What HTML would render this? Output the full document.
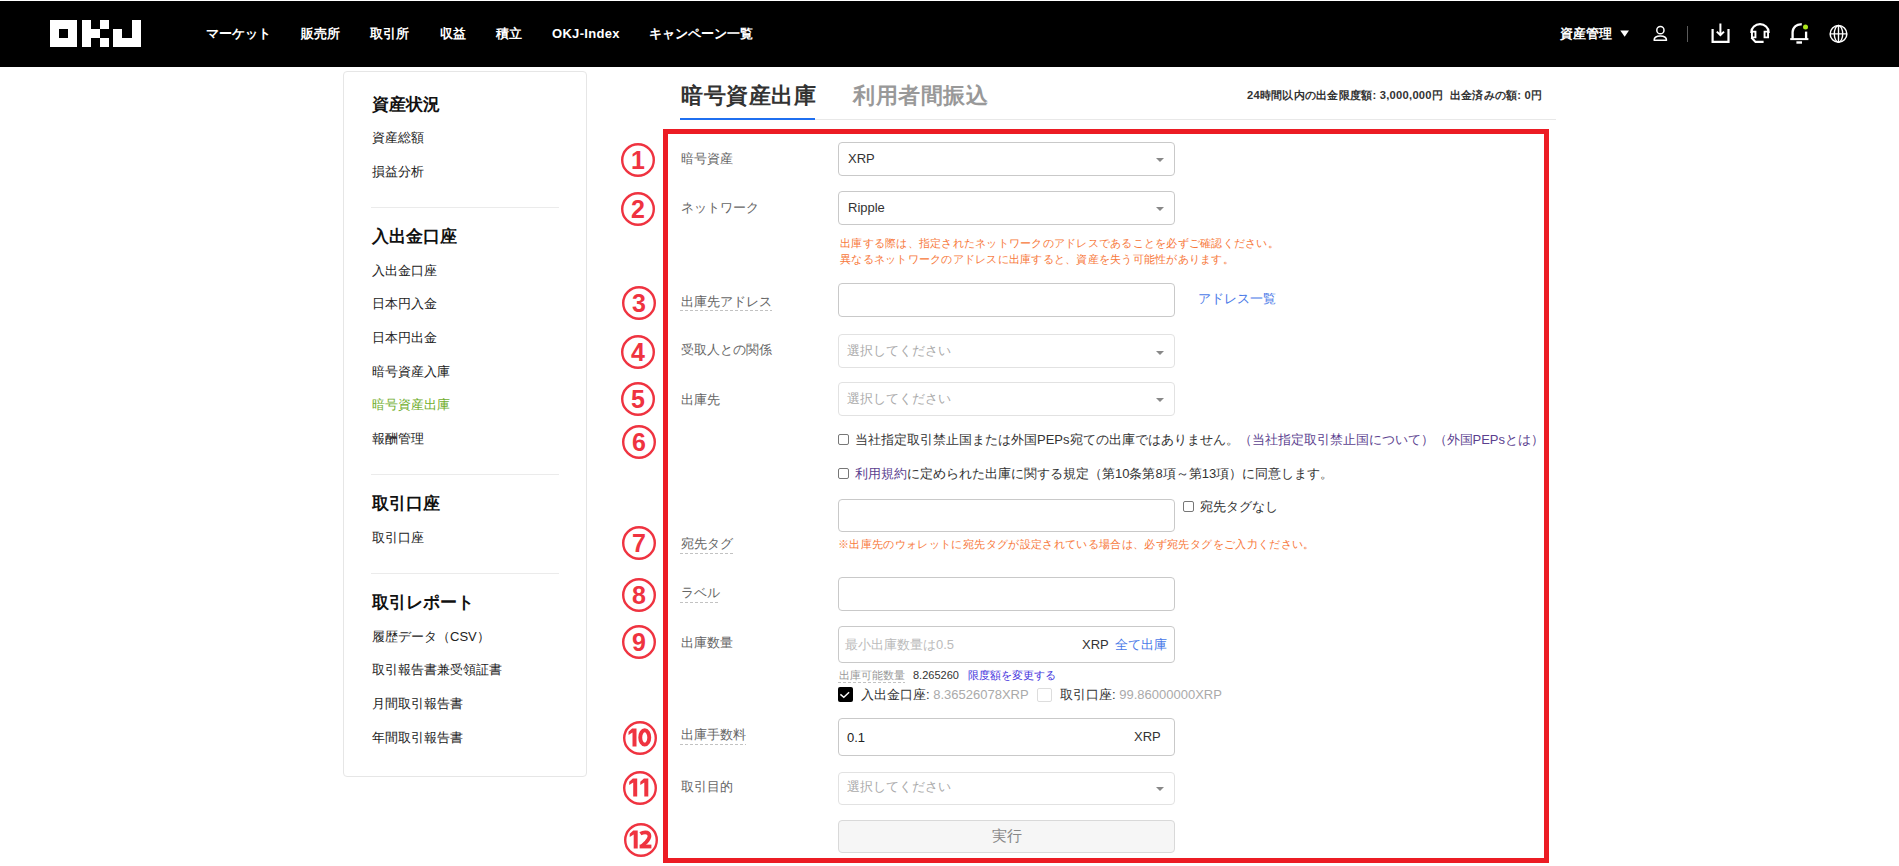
<!DOCTYPE html>
<html lang="ja"><head><meta charset="utf-8">
<style>
*{box-sizing:border-box;margin:0;padding:0}
html,body{width:1899px;height:866px;overflow:hidden;background:#fff;font-family:"Liberation Sans",sans-serif;color:#333}
.a{position:absolute;white-space:nowrap}
.t{position:absolute;white-space:nowrap;line-height:20px;font-size:13px}
#hdr{position:absolute;left:0;top:1px;width:1899px;height:66px;background:#000}
.nav{color:#fff;font-weight:bold;font-size:13px;top:24px}
#card{position:absolute;left:343px;top:71px;width:244px;height:706px;border:1px solid #e6e6e6;border-radius:4px}
.sh{font-size:16.5px;font-weight:bold;color:#111;left:372px}
.si{font-size:13px;color:#222;left:372px}
.dv{position:absolute;left:371px;width:188px;height:1px;background:#ebebeb}
.lbl{left:681px;color:#666}
.inp{position:absolute;left:838px;width:337px;border:1px solid #c9c9c9;border-radius:4px;background:#fff}
.inp.l{border-color:#e2e2e2}
.arr{position:absolute;right:10px;width:0;height:0;border-left:4px solid transparent;border-right:4px solid transparent;border-top:4px solid #888}
.circ{position:absolute;left:620px;width:35px;height:35px}
.dash{border-bottom:1px dashed #bbb}
.org{color:#f77b3d;font-size:11px}
.dsh{height:1px;background:repeating-linear-gradient(90deg,#c2c2c2 0 3px,transparent 3px 5px)}
.cb{position:absolute;width:11px;height:11px;border:1px solid #777;border-radius:2px;background:#fff}
</style></head><body>
<div id="hdr"></div>
<!-- logo -->
<svg class="a" style="left:50px;top:20px" width="92" height="28" viewBox="0 0 92 28">
<path fill="#fff" d="M0 0H27V27H0Z M9 9V18H18V9Z" fill-rule="evenodd"/>
<rect fill="#fff" x="32" y="0" width="9" height="27"/>
<rect fill="#fff" x="50" y="0" width="9" height="9"/>
<rect fill="#fff" x="41" y="9" width="9" height="9"/>
<rect fill="#fff" x="50" y="18" width="9" height="9"/>
<rect fill="#fff" x="63" y="18" width="28" height="9"/>
<rect fill="#fff" x="82" y="0" width="9" height="27"/>
<rect fill="#fff" x="63" y="9" width="9" height="18"/>
</svg>
<div class="t nav" style="left:206px">マーケット</div>
<div class="t nav" style="left:301px">販売所</div>
<div class="t nav" style="left:370px">取引所</div>
<div class="t nav" style="left:440px">収益</div>
<div class="t nav" style="left:496px">積立</div>
<div class="t nav" style="left:552px;letter-spacing:0.3px">OKJ-Index</div>
<div class="t nav" style="left:649px">キャンペーン一覧</div>
<div class="t nav" style="left:1560px;top:24px">資産管理</div>
<svg class="a" style="left:1600px;top:15px" width="260" height="35" viewBox="1600 15 260 35">
<path d="M1620.3 30.4H1629L1624.65 36.7Z" fill="#fff"/>
<circle cx="1660.4" cy="30.2" r="3.6" fill="none" stroke="#fff" stroke-width="1.5"/>
<path d="M1654.1 40.3C1654.1 37.6 1656.8 36 1660.3 36S1666.5 37.6 1666.5 40.3Z" fill="none" stroke="#fff" stroke-width="1.5" stroke-linejoin="round"/>
<rect x="1687" y="26" width="1" height="16" fill="#5a5a5a"/>
<path d="M1712.6 29V41.8H1728.5V29" fill="none" stroke="#fff" stroke-width="2.2"/>
<path d="M1720.4 23.5V35M1716.8 31.6L1720.4 35.2L1724 31.6" fill="none" stroke="#fff" stroke-width="2"/>
<path d="M1751.4 33V32A8.6 7.8 0 0 1 1768.6 32V33" fill="none" stroke="#fff" stroke-width="2.2"/>
<path d="M1751.95 31.65H1755.45V37.35H1751.95Z" fill="none" stroke="#fff" stroke-width="1.9"/>
<path d="M1764.55 31.65H1768.05V37.35H1764.55Z" fill="none" stroke="#fff" stroke-width="1.9"/>
<path d="M1751.4 37.5L1755.5 41.9H1763.6" fill="none" stroke="#fff" stroke-width="2.1"/>
<path d="M1792.6 39V32A8 8 0 0 1 1801.8 24.4" fill="none" stroke="#fff" stroke-width="2.3"/>
<path d="M1806.1 31.6V39" fill="none" stroke="#fff" stroke-width="2.3"/>
<path d="M1790.2 39.1H1808.4" fill="none" stroke="#fff" stroke-width="2"/>
<path d="M1796.4 42.5H1802" fill="none" stroke="#fff" stroke-width="2.4"/>
<circle cx="1805.5" cy="27" r="2.5" fill="#aee81c"/>
<circle cx="1838.5" cy="33.9" r="8.35" fill="none" stroke="#fff" stroke-width="1.5"/>
<ellipse cx="1838.5" cy="33.9" rx="4.2" ry="8.35" fill="none" stroke="#fff" stroke-width="1.4"/>
<path d="M1838.5 25.5V42.3M1830.2 33.9H1846.8" stroke="#fff" stroke-width="1.4"/>
</svg>

<!-- sidebar -->
<div id="card"></div>
<div class="t sh" style="top:94px">資産状況</div>
<div class="t si" style="top:128px">資産総額</div>
<div class="t si" style="top:162px">損益分析</div>
<div class="dv" style="top:207px"></div>
<div class="t sh" style="top:226px">入出金口座</div>
<div class="t si" style="top:261px">入出金口座</div>
<div class="t si" style="top:294px">日本円入金</div>
<div class="t si" style="top:328px">日本円出金</div>
<div class="t si" style="top:362px">暗号資産入庫</div>
<div class="t si" style="top:395px;color:#6fae2d">暗号資産出庫</div>
<div class="t si" style="top:429px">報酬管理</div>
<div class="dv" style="top:474px"></div>
<div class="t sh" style="top:493px">取引口座</div>
<div class="t si" style="top:528px">取引口座</div>
<div class="dv" style="top:573px"></div>
<div class="t sh" style="top:591.5px">取引レポート</div>
<div class="t si" style="top:627px">履歴データ（CSV）</div>
<div class="t si" style="top:660px">取引報告書兼受領証書</div>
<div class="t si" style="top:694px">月間取引報告書</div>
<div class="t si" style="top:728px">年間取引報告書</div>

<!-- tabs -->
<div class="a" style="left:681px;top:81px;line-height:30px;font-size:22px;letter-spacing:0.5px;font-weight:bold;color:#333">暗号資産出庫</div>
<div class="a" style="left:853px;top:81px;line-height:30px;font-size:22px;letter-spacing:0.5px;font-weight:bold;color:#999">利用者間振込</div>
<div class="a" style="left:815px;top:119px;width:741px;height:1px;background:#e8e8e8"></div>
<div class="a" style="left:680px;top:118px;width:135px;height:2px;background:#1f6ff0"></div>
<div class="a" style="left:1247px;top:84.5px;line-height:20px;font-size:11.2px;letter-spacing:0.25px;font-weight:bold;color:#333">24時間以内の出金限度額: 3,000,000円&nbsp; 出金済みの額: 0円</div>

<!-- red box -->
<div class="a" style="left:663px;top:129px;width:886px;height:734px;border:5px solid #ec1c24"></div>
<svg class="a" style="left:619.5px;top:142.0px" width="36" height="36" viewBox="0 0 36 36"><circle cx="18" cy="18" r="15.8" fill="none" stroke="#ef3340" stroke-width="2.4"/><text x="18" y="26.5" text-anchor="middle" font-family="Liberation Sans" font-weight="bold" font-size="25" fill="#ef3340">1</text></svg>
<svg class="a" style="left:619.5px;top:191.0px" width="36" height="36" viewBox="0 0 36 36"><circle cx="18" cy="18" r="15.8" fill="none" stroke="#ef3340" stroke-width="2.4"/><text x="18" y="26.5" text-anchor="middle" font-family="Liberation Sans" font-weight="bold" font-size="25" fill="#ef3340">2</text></svg>
<svg class="a" style="left:620.5px;top:285.0px" width="36" height="36" viewBox="0 0 36 36"><circle cx="18" cy="18" r="15.8" fill="none" stroke="#ef3340" stroke-width="2.4"/><text x="18" y="26.5" text-anchor="middle" font-family="Liberation Sans" font-weight="bold" font-size="25" fill="#ef3340">3</text></svg>
<svg class="a" style="left:619.5px;top:334.0px" width="36" height="36" viewBox="0 0 36 36"><circle cx="18" cy="18" r="15.8" fill="none" stroke="#ef3340" stroke-width="2.4"/><text x="18" y="26.5" text-anchor="middle" font-family="Liberation Sans" font-weight="bold" font-size="25" fill="#ef3340">4</text></svg>
<svg class="a" style="left:620.0px;top:381.3px" width="36" height="36" viewBox="0 0 36 36"><circle cx="18" cy="18" r="15.8" fill="none" stroke="#ef3340" stroke-width="2.4"/><text x="18" y="26.5" text-anchor="middle" font-family="Liberation Sans" font-weight="bold" font-size="25" fill="#ef3340">5</text></svg>
<svg class="a" style="left:620.5px;top:424.0px" width="36" height="36" viewBox="0 0 36 36"><circle cx="18" cy="18" r="15.8" fill="none" stroke="#ef3340" stroke-width="2.4"/><text x="18" y="26.5" text-anchor="middle" font-family="Liberation Sans" font-weight="bold" font-size="25" fill="#ef3340">6</text></svg>
<svg class="a" style="left:620.6px;top:525.0px" width="36" height="36" viewBox="0 0 36 36"><circle cx="18" cy="18" r="15.8" fill="none" stroke="#ef3340" stroke-width="2.4"/><text x="18" y="26.5" text-anchor="middle" font-family="Liberation Sans" font-weight="bold" font-size="25" fill="#ef3340">7</text></svg>
<svg class="a" style="left:620.6px;top:577.0px" width="36" height="36" viewBox="0 0 36 36"><circle cx="18" cy="18" r="15.8" fill="none" stroke="#ef3340" stroke-width="2.4"/><text x="18" y="26.5" text-anchor="middle" font-family="Liberation Sans" font-weight="bold" font-size="25" fill="#ef3340">8</text></svg>
<svg class="a" style="left:620.6px;top:624.0px" width="36" height="36" viewBox="0 0 36 36"><circle cx="18" cy="18" r="15.8" fill="none" stroke="#ef3340" stroke-width="2.4"/><text x="18" y="26.5" text-anchor="middle" font-family="Liberation Sans" font-weight="bold" font-size="25" fill="#ef3340">9</text></svg>
<svg class="a" style="left:621.5px;top:719.5px" width="36" height="36" viewBox="0 0 36 36"><circle cx="18" cy="18" r="15.8" fill="none" stroke="#ef3340" stroke-width="2.4"/><path transform="translate(18 18)" fill="#ef3340" d="M-3.50 8.4V-9.6H-7.90L-11.50 -6.30V-3.10L-7.50 -5.40V8.4Z"/><ellipse transform="translate(18 18)" cx="4.75" cy="-0.6" rx="4.5" ry="7.1" fill="none" stroke="#ef3340" stroke-width="3.9"/></svg>
<svg class="a" style="left:621.5px;top:769.7px" width="36" height="36" viewBox="0 0 36 36"><circle cx="18" cy="18" r="15.8" fill="none" stroke="#ef3340" stroke-width="2.4"/><path transform="translate(18 18)" fill="#ef3340" d="M-2.80 8.4V-9.6H-7.20L-10.80 -6.30V-3.10L-6.80 -5.40V8.4ZM8.30 8.4V-9.6H3.90L0.30 -6.30V-3.10L4.30 -5.40V8.4Z"/></svg>
<svg class="a" style="left:622.6px;top:821.8px" width="36" height="36" viewBox="0 0 36 36"><circle cx="18" cy="18" r="15.8" fill="none" stroke="#ef3340" stroke-width="2.4"/><path transform="translate(18 18)" fill="#ef3340" d="M-3.30 8.4V-9.6H-7.70L-11.30 -6.30V-3.10L-7.30 -5.40V8.4Z"/><path transform="translate(18 18)" fill="none" stroke="#ef3340" stroke-width="3.7" stroke-linejoin="round" d="M-0.6 -6.2Q1.6 -7.7 4.2 -7.7Q8.5 -7.7 8.5 -3.9Q8.5 -1.2 5.2 2.1L0.4 6.5"/><path transform="translate(18 18)" fill="#ef3340" d="M-1.4 4.6H10.4V8.4H-1.4Z"/></svg>
<div class="t" style="left:681px;top:149.0px;color:#666">暗号資産</div>
<div class="t" style="left:681px;top:198.0px;color:#666">ネットワーク</div>
<div class="t" style="left:681px;top:291.5px;color:#666">出庫先アドレス</div>
<div class="a dsh" style="left:680px;top:310px;width:92px"></div>
<div class="t" style="left:681px;top:340.3px;color:#666">受取人との関係</div>
<div class="t" style="left:681px;top:389.7px;color:#666">出庫先</div>
<div class="t" style="left:681px;top:534.2px;color:#666">宛先タグ</div>
<div class="a dsh" style="left:680px;top:553px;width:53px"></div>
<div class="t" style="left:681px;top:583.0px;color:#666">ラベル</div>
<div class="a dsh" style="left:680px;top:602px;width:40px"></div>
<div class="t" style="left:681px;top:632.5px;color:#666">出庫数量</div>
<div class="t" style="left:681px;top:725.2px;color:#666">出庫手数料</div>
<div class="a dsh" style="left:680px;top:744px;width:66px"></div>
<div class="t" style="left:681px;top:777.4px;color:#666">取引目的</div>
<div class="inp" style="top:142px;height:34px;"></div>
<div class="t" style="left:848px;top:148.5px;color:#333">XRP</div>
<div class="a arr" style="left:1156px;top:158px"></div>
<div class="inp" style="top:191px;height:34px;"></div>
<div class="t" style="left:848px;top:198.0px;color:#333">Ripple</div>
<div class="a arr" style="left:1156px;top:207px"></div>
<div class="t" style="left:840px;top:232.5px;color:#f7783a;font-size:11px;letter-spacing:0.25px">出庫する際は、指定されたネットワークのアドレスであることを必ずご確認ください。</div>
<div class="t" style="left:840px;top:248.5px;color:#f7783a;font-size:11px;letter-spacing:0.25px">異なるネットワークのアドレスに出庫すると、資産を失う可能性があります。</div>
<div class="inp" style="top:283px;height:34px;"></div>
<div class="t" style="left:1198px;top:289.0px;color:#4a7ae8">アドレス一覧</div>
<div class="inp l" style="top:334px;height:34px;"></div>
<div class="t" style="left:847px;top:341.0px;color:#aaa">選択してください</div>
<div class="a arr" style="left:1156px;top:350.5px"></div>
<div class="inp l" style="top:382px;height:34px;"></div>
<div class="t" style="left:847px;top:388.6px;color:#aaa">選択してください</div>
<div class="a arr" style="left:1156px;top:398px"></div>
<div class="cb" style="left:838px;top:434px"></div>
<div class="t" style="left:855px;top:429.5px;color:#333">当社指定取引禁止国または外国PEPs宛ての出庫ではありません。<span style="color:#5b3f8f">（当社指定取引禁止国について）（外国PEPsとは）</span></div>
<div class="cb" style="left:838px;top:468px"></div>
<div class="t" style="left:855px;top:464.0px;color:#333"><span style="color:#5b3f8f">利用規約</span>に定められた出庫に関する規定（第10条第8項～第13項）に同意します。</div>
<div class="inp" style="top:499px;height:33px;"></div>
<div class="cb" style="left:1183px;top:500.5px"></div>
<div class="t" style="left:1200px;top:497.0px;color:#333">宛先タグなし</div>
<div class="t" style="left:838px;top:533.7px;color:#f7783a;font-size:11px;letter-spacing:0.25px;letter-spacing:0.35px">※出庫先のウォレットに宛先タグが設定されている場合は、必ず宛先タグをご入力ください。</div>
<div class="inp" style="top:577px;height:34px;"></div>
<div class="inp" style="top:626px;height:36.5px;"></div>
<div class="t" style="left:845px;top:634.6px;color:#bbb">最小出庫数量は0.5</div>
<div class="t" style="left:1082px;top:634.6px;color:#333">XRP</div>
<div class="t" style="left:1115px;top:634.6px;color:#4a7ae8">全て出庫</div>
<div class="t" style="left:838.5px;top:665.0px;color:#999;font-size:11px">出庫可能数量</div>
<div class="a dsh" style="left:838px;top:682px;width:67px"></div>
<div class="t" style="left:913px;top:665.0px;color:#333;font-size:11px">8.265260</div>
<div class="t" style="left:968px;top:665.0px;color:#4433dd;font-size:11px">限度額を変更する</div>
<div class="a" style="left:838px;top:687px;width:15px;height:15px;background:#000;border-radius:2px"><svg width="15" height="15" style="position:absolute;left:0;top:0"><path d="M2.4 7.4L5.8 10.3L11.1 5.2" fill="none" stroke="#fff" stroke-width="1.4"/></svg></div>
<div class="t" style="left:861px;top:685.4px;color:#333">入出金口座: <span style="color:#aaa">8.36526078XRP</span></div>
<div class="a" style="left:1037px;top:687.5px;width:14.5px;height:14.5px;border:1px solid #ddd;border-radius:2px"></div>
<div class="t" style="left:1060px;top:685.4px;color:#333">取引口座: <span style="color:#aaa">99.86000000XRP</span></div>
<div class="inp" style="top:718px;height:37.5px;"></div>
<div class="t" style="left:847px;top:728.0px;color:#222">0.1</div>
<div class="t" style="left:1134px;top:727.0px;color:#333">XRP</div>
<div class="inp l" style="top:771.5px;height:33.5px;"></div>
<div class="t" style="left:847px;top:777.0px;color:#aaa">選択してください</div>
<div class="a arr" style="left:1156px;top:787px"></div>
<div class="inp" style="top:820px;height:32.5px;background:#f6f6f6;border-color:#d9d9d9"></div>
<div class="t" style="left:991.5px;top:826.4px;color:#888;font-size:15px">実行</div>
</body></html>
